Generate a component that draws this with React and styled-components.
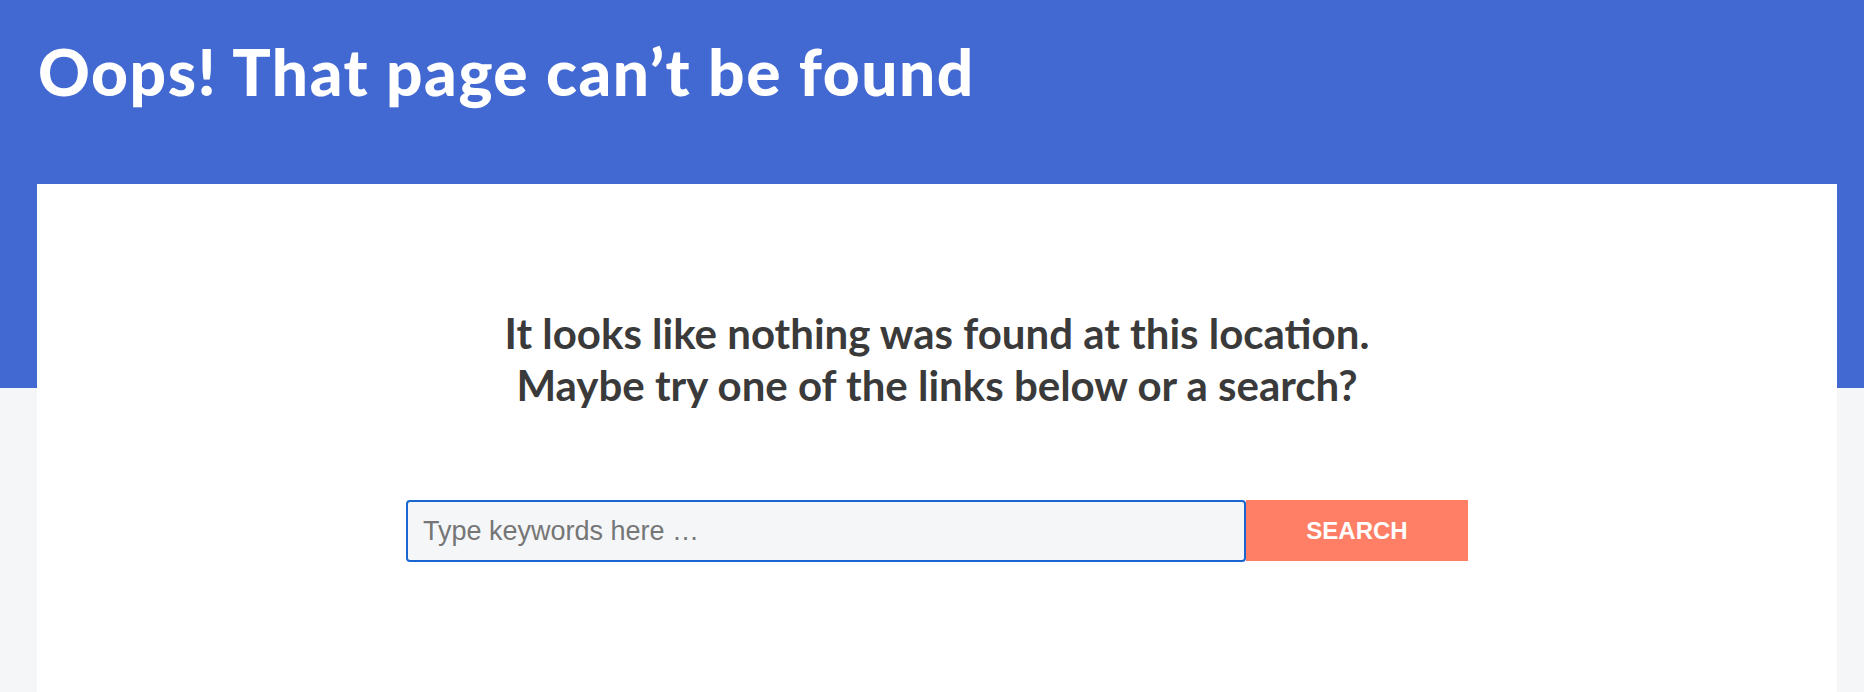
import React from "react";
import styled, { createGlobalStyle } from "styled-components";

const Global = createGlobalStyle`
  html, body { margin: 0; padding: 0; }
  body {
    background: #f5f6f8;
    font-family: "Lato", "Liberation Sans", sans-serif;
  }
`;

const Page = styled.div`
  min-height: 692px;
  background: linear-gradient(to bottom, #4269d2 0, #4269d2 388px, #f5f6f8 388px);
  display: flex;
  flex-direction: column;
`;

const Header = styled.header`
  height: 184px;
  box-sizing: border-box;
  padding: 33px 38px 0;
`;

const Title = styled.h1`
  margin: 0;
  color: #ffffff;
  font-family: "Lato", sans-serif;
  font-weight: 900;
  font-size: 64px;
  line-height: 77px;
  letter-spacing: 1.55px;
`;

const Card = styled.main`
  flex: 1;
  margin: 0 27px 0 37px;
  background: #ffffff;
  display: flex;
  flex-direction: column;
  align-items: center;
  padding-top: 123px;
`;

const Lead = styled.h2`
  margin: 0;
  text-align: center;
  color: #3a3a3a;
  font-family: "Lato", sans-serif;
  font-weight: 700;
  font-size: 42px;
  line-height: 52px;
  letter-spacing: 0;
`;

const SearchForm = styled.form`
  display: flex;
  margin-top: 89px;
  width: 1062px;
`;

const Input = styled.input`
  width: 840px;
  height: 62px;
  box-sizing: border-box;
  border: 2px solid #1a66d1;
  border-radius: 4px;
  background: #f5f6f8;
  padding: 0 15px;
  font-family: "Liberation Sans", Arial, sans-serif;
  font-size: 27px;
  color: #333;
  outline: none;
  &::placeholder { color: #767676; }
`;

const Button = styled.button`
  width: 222px;
  height: 61px;
  border: 0;
  border-radius: 0;
  background: #ff7f66;
  color: #ffffff;
  font-family: "Liberation Sans", Arial, sans-serif;
  font-weight: 700;
  font-size: 24px;
  text-transform: uppercase;
  cursor: pointer;
`;

export default function App() {
  return (
    <>
      <Global />
      <Page>
        <Header>
          <Title>Oops! That page can’t be found</Title>
        </Header>
        <Card>
          <Lead>
            It looks like nothing was found at this location.
            <br />
            Maybe try one of the links below or a search?
          </Lead>
          <SearchForm onSubmit={(e) => e.preventDefault()}>
            <Input type="search" placeholder="Type keywords here …" />
            <Button type="submit">Search</Button>
          </SearchForm>
        </Card>
      </Page>
    </>
  );
}
